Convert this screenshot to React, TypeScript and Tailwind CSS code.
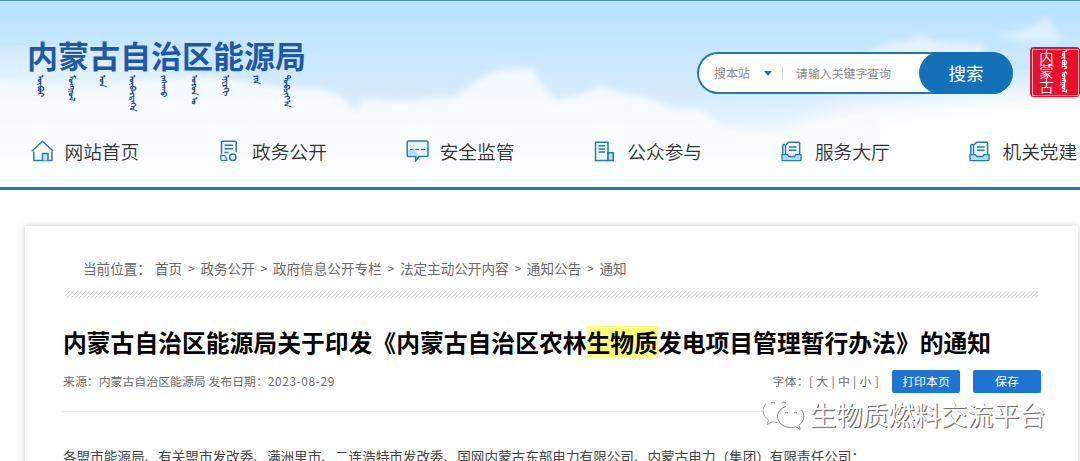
import React from "react";

const HomeIcon = () => (
  <svg width="23" height="22" viewBox="0 0 23 22" fill="none" stroke="#2a7aae" strokeWidth="1.5">
    <path d="M1.200 10.700 11.500 1.200 21.800 10.700" strokeLinejoin="round" strokeLinecap="round" />
    <path d="M2.800 11.500v8.300q0 .8.800.8h16.500q.8 0 .8-.8v-8.300" />
    <path d="M11.500 20.400v-6.900h5.500v6.900" fill="#c6e4f8" />
  </svg>
);

const PolicyIcon = () => (
  <svg width="19" height="22" viewBox="0 0 19 22" fill="none" stroke="#2a7aae" strokeWidth="1.5">
    <path d="M17.200 12V2q0-.8-.8-.8H3.300q-.8 0-.8.800v12.500" fill="#edf8ff" />
    <path d="M5.500 5.200h8.500M5.500 8.800h8.500M5.500 12.400h4" />
    <path d="M1.800 15.500h3.700q1.500 0 1.500 2.200t1.500 2.800H3q-1.200 0-1.200-1.200z" fill="#d5ecfb" strokeWidth="1.200" />
    <circle cx="13.800" cy="17.200" r="3.200" fill="#edf8ff" />
  </svg>
);

const ChatIcon = () => (
  <svg width="23" height="22" viewBox="0 0 23 22" fill="none" stroke="#2a7aae" strokeWidth="1.5">
    <path d="M2.500 1h18.300q1.200 0 1.200 1.200v13.200q0 1.200-1.200 1.200H13l-3.200 4v-4H2.500q-1.300 0-1.300-1.200V2.200Q1.200 1 2.500 1z" fill="#eaf6fe" />
    <path d="M2 10h7l4 6H2z" fill="#b9dcf6" stroke="none" />
    <path d="M4 9.500h3.500M9.500 9.500H13M15 9.500h4" strokeWidth="1.200" />
  </svg>
);

const BuildingIcon = () => (
  <svg width="21" height="21" viewBox="0 0 21 21" fill="none" stroke="#2a7aae" strokeWidth="1.5">
    <path d="M1.500 1.200h12.500v18.200H1.500z" fill="#edf8ff" />
    <path d="M14 11.800h5.300v7.600H14z" fill="#b9dff7" />
    <path d="M4.500 4.800h6.500M4.500 7.900h6.500M4.500 11h6.500" />
  </svg>
);

const TrayIcon = () => (
  <svg width="21" height="21" viewBox="0 0 21 21" fill="none" stroke="#2a7aae" strokeWidth="1.5">
    <path d="M4.500 14.500V4.200L7.500 1.200h10.300q.8 0 .8.800v12.500" fill="#edf8ff" />
    <path d="M4.500 3.500H2.800q-1 0-1 1V14" />
    <path d="M8 6h7.500M8 9.200h7.500" />
    <path d="M1 13.700h5.500l1.200 1.800h6l1.200-1.800H20v5q0 .9-.9.900H1.900q-.9 0-.9-.900z" fill="#b4dbf6" strokeWidth="1.300" />
  </svg>
);

const navItems = [
  { label: "网站首页", icon: <HomeIcon /> },
  { label: "政务公开", icon: <PolicyIcon /> },
  { label: "安全监管", icon: <ChatIcon /> },
  { label: "公众参与", icon: <BuildingIcon /> },
  { label: "服务大厅", icon: <TrayIcon /> },
  { label: "机关党建", icon: <TrayIcon /> },
];

const mongolian = ["ᠥᠪᠥᠷ", "ᠮᠣᠩᠭᠣᠯ", "ᠤᠨ", "ᠥᠪᠡᠷᠲᠡᠭᠡᠨ", "ᠵᠠᠰᠠᠬᠤ", "ᠣᠷᠣᠨ ᠤ", "ᠡᠨᠧᠷᠭᠢ", "ᠶᠢᠨ", "ᠲᠣᠪᠴᠢᠶ᠎ᠠ"];

const crumbs = ["首页", "政务公开", "政府信息公开专栏", "法定主动公开内容", "通知公告", "通知"];

const Sky = () => (
  <svg className="absolute inset-0" width="1080" height="190" viewBox="0 0 1080 190" preserveAspectRatio="none">
    <defs>
      <linearGradient id="sky" x1="0" y1="0" x2="0" y2="1">
        <stop offset="0" stopColor="#b7e2ff" />
        <stop offset="0.5" stopColor="#d6ebfd" />
        <stop offset="0.85" stopColor="#fbfeff" />
      </linearGradient>
      <linearGradient id="cloud" gradientUnits="userSpaceOnUse" x1="0" y1="65" x2="0" y2="190">
        <stop offset="0" stopColor="#f0f8ff" />
        <stop offset="0.5" stopColor="#f8fcff" />
        <stop offset="1" stopColor="#fdffff" />
      </linearGradient>
      <filter id="soft">
        <feGaussianBlur stdDeviation="3" />
      </filter>
      <filter id="softer">
        <feGaussianBlur stdDeviation="14" />
      </filter>
    </defs>
    <rect width="1080" height="190" fill="url(#sky)" />
    <ellipse cx="60" cy="80" rx="110" ry="30" fill="#eef7ff" opacity="0.6" filter="url(#softer)" />
    <path d="M850 108 1100 80V200H700L720 155z" fill="#fdffff" filter="url(#softer)" />
    <path
      d="M-20 78 40 82 100 84 150 78 190 74 230 77 260 83 290 87 320 88 340 95 358 112 362 98 400 101 455 96 482 76 500 69 532 67 545 88 558 99 575 96 600 86 618 91 650 98 675 108 700 108 722 125 780 134 830 118 880 110V200H-20z"
      fill="url(#cloud)"
      filter="url(#soft)"
    />
    <path d="M865 52 890 42 908 40 920 33 935 40 950 42 985 44 980 60H870z" fill="#e8f5ff" opacity="0.8" filter="url(#soft)" />
    <path d="M995 35 1030 27 1048 16 1056 30 1065 40 1050 42 1020 40z" fill="#e3f3ff" opacity="0.8" filter="url(#soft)" />
  </svg>
);

const Header = () => (
  <header className="relative h-[190px] border-t border-b-[3px] border-t-[#4d8db4] border-b-[#2878ad] overflow-hidden">
    <Sky />
    <div className="relative flex h-[112px]">
      {/* Logo */}
      <div className="pl-[27px] pt-[37px] w-[697px]">
        <h1 className="text-[31px] leading-[34px] font-bold text-[#1f58a9] whitespace-nowrap">内蒙古自治区能源局</h1>
        <div className="flex pl-[6px] pt-[3px] text-[#24508f]">
          {mongolian.map((word) => (
            <span
              key={word}
              className="w-[30.800px] h-[37px] text-[8px] leading-[16px] font-bold whitespace-nowrap [writing-mode:vertical-lr]"
            >
              {word}
            </span>
          ))}
        </div>
      </div>

      {/* Search */}
      <div className="mt-[51px] w-[316px] h-[42px] shrink-0 flex items-center rounded-full border-2 border-r-0 border-[#2576ad] bg-white">
        <span className="ml-[15px] text-[12px] text-[#8a8a8a]">搜本站</span>
        <svg className="ml-[14px]" width="8" height="5" viewBox="0 0 8 5">
          <path d="M0 0h8L4 5z" fill="#2276b0" />
        </svg>
        <span className="ml-[10px] w-px h-3.5 bg-[#d5d5d5]" />
        <span className="ml-[13px] text-[11.900px] text-[#8c8c8c] whitespace-nowrap">请输入关键字查询</span>
        <button className="ml-auto w-[94px] h-[42px] shrink-0 rounded-full bg-[#1371b8] text-[17.500px] text-white">搜索</button>
      </div>

      {/* Seal */}
      <div className="mt-[46px] ml-[17px] w-[50px] h-[50px] shrink-0 rounded-sm bg-[#e8112d] p-[1.500px]">
        <div className="h-full border border-[#f8b4bd] flex items-center justify-between pl-[6px] pr-[7px] text-white">
          <span className="text-[14.500px] leading-[14.500px] font-[350] [writing-mode:vertical-rl]">内蒙古</span>
          <span className="text-[6.500px] leading-[13px] font-bold [writing-mode:vertical-lr] whitespace-nowrap">ᠥᠪᠥᠷ ᠮᠣᠩᠭᠣᠯ</span>
        </div>
      </div>
    </div>

    {/* Nav */}
    <nav className="relative flex pl-[31px] h-[76px]">
      {navItems.map((item) => (
        <a key={item.label} href="#" className="w-[187.600px] h-[76px] shrink-0 flex items-center">
          <span className="w-[33.500px]">{item.icon}</span>
          <span className="text-[18.700px] font-[350] text-[#333] whitespace-nowrap">{item.label}</span>
        </a>
      ))}
    </nav>
  </header>
);

const Watermark = () => (
  <div className="absolute left-[737px] top-[170px] flex items-center gap-[5px]">
    <svg width="43" height="36" viewBox="0 0 43 36" fill="#fff" stroke="#8b8b8b" strokeWidth="1">
      <path d="M17 2C8 2 1 7.500 1 14.500c0 4 2 7 5.500 9.500L5 28.500l5.500-2.800c2 .6 4 .9 6.500.9 9 0 16-5.500 16-12S26 2 17 2z" stroke="none" />
      <path d="M4 7.500C-.500 13 .500 20 6.500 24L5 28.500l5.500-2.800q2.500.8 5 .9" fill="none" stroke="#9a9a9a" />
      <path d="M29 9.500c-7.500 0-13.500 5-13.500 11s6 11 13.500 11c1.700 0 3.200-.2 4.700-.7l4.500 2.500-1.300-4c3-2.200 5-5.200 5-8.800 0-6-5.500-11-12.900-11z" stroke="none" />
      <path d="M24 10.500c-5 1.500-8.500 5.500-8.500 10 0 6 6 11 13.500 11 1.700 0 3.200-.2 4.700-.7l4.500 2.500-1.300-4c3-2.200 5-5.200 5-8.800 0-2.500-1-4.800-2.500-6.500" fill="none" />
      <path d="M9 7q2-2 4 0M20 7q2-2 4 0M23 17q1.500-1.500 3 0M32 17q1.500-1.500 3 0" fill="none" />
    </svg>
    <span className="text-[26.200px] leading-[36px] font-[350] text-white whitespace-nowrap [text-shadow:1px_1px_0_#707070,1px_1px_1px_#999]">
      生物质燃料交流平台
    </span>
  </div>
);

const App: React.FC = () => {
  return (
    <div className="w-[1080px] h-[461px] overflow-hidden bg-white font-['Noto_Sans_CJK_SC','Noto_Sans',sans-serif]">
      <Header />

      <main className="pt-9 pl-[25px]">
        <div className="relative w-[1053px] h-[260px] bg-white shadow-[0_0_8px_rgba(0,0,0,0.2)]">
          {/* Breadcrumb */}
          <div className="ml-[58px] pt-8 flex h-[65px] text-[13.600px] leading-5 text-[#6a6a6a] whitespace-nowrap">
            <span className="w-[72px]">当前位置：</span>
            {crumbs.map((crumb, i) => (
              <React.Fragment key={crumb}>
                {i > 0 && <span className="w-[18.200px] text-center text-[12px]">&gt;</span>}
                <a href="#">{crumb}</a>
              </React.Fragment>
            ))}
          </div>
          <div className="ml-10 w-[973px] h-[7px] bg-[repeating-linear-gradient(135deg,#dedede_0px,#dedede_0.8px,#fff_1.400px,#fff_2.830px)]" />

          {/* Title */}
          <h2 className="ml-[38px] mt-7 flex items-center h-8 text-[23.800px] leading-8 font-bold text-black whitespace-nowrap">
            内蒙古自治区能源局关于印发《内蒙古自治区农林
            <mark className="h-8 leading-8 bg-[#ffff78] text-black">生物质</mark>
            发电项目管理暂行办法》的通知
          </h2>

          <div className="ml-[38px] mt-[11px] w-[978px] flex items-center h-6 text-[11.900px] text-[#6b6b6b] whitespace-nowrap">
            <span>来源：内蒙古自治区能源局 发布日期：</span>
            <span className="tracking-[0.600px]">2023-08-29</span>
            <span className="ml-auto mr-[13px] tracking-[0.300px]">字体：[ 大 | 中 | 小 ]</span>
            <button className="w-[68px] h-[23px] rounded-xs bg-[#1e74d2] text-white">打印本页</button>
            <button className="ml-[13px] w-[68px] h-[23px] rounded-xs bg-[#1e74d2] text-white">保存</button>
          </div>
          <hr className="ml-[37px] mt-[18px] w-[979px] border-[#ececec]" />
          <Watermark />
          <p className="ml-[38px] mt-[34px] text-[13.600px] leading-5 text-[#444] whitespace-nowrap">
            各盟市能源局、有关盟市发改委、满洲里市、二连浩特市发改委、国网内蒙古东部电力有限公司、内蒙古电力（集团）有限责任公司：
          </p>
        </div>
      </main>
    </div>
  );
};

export default App;
